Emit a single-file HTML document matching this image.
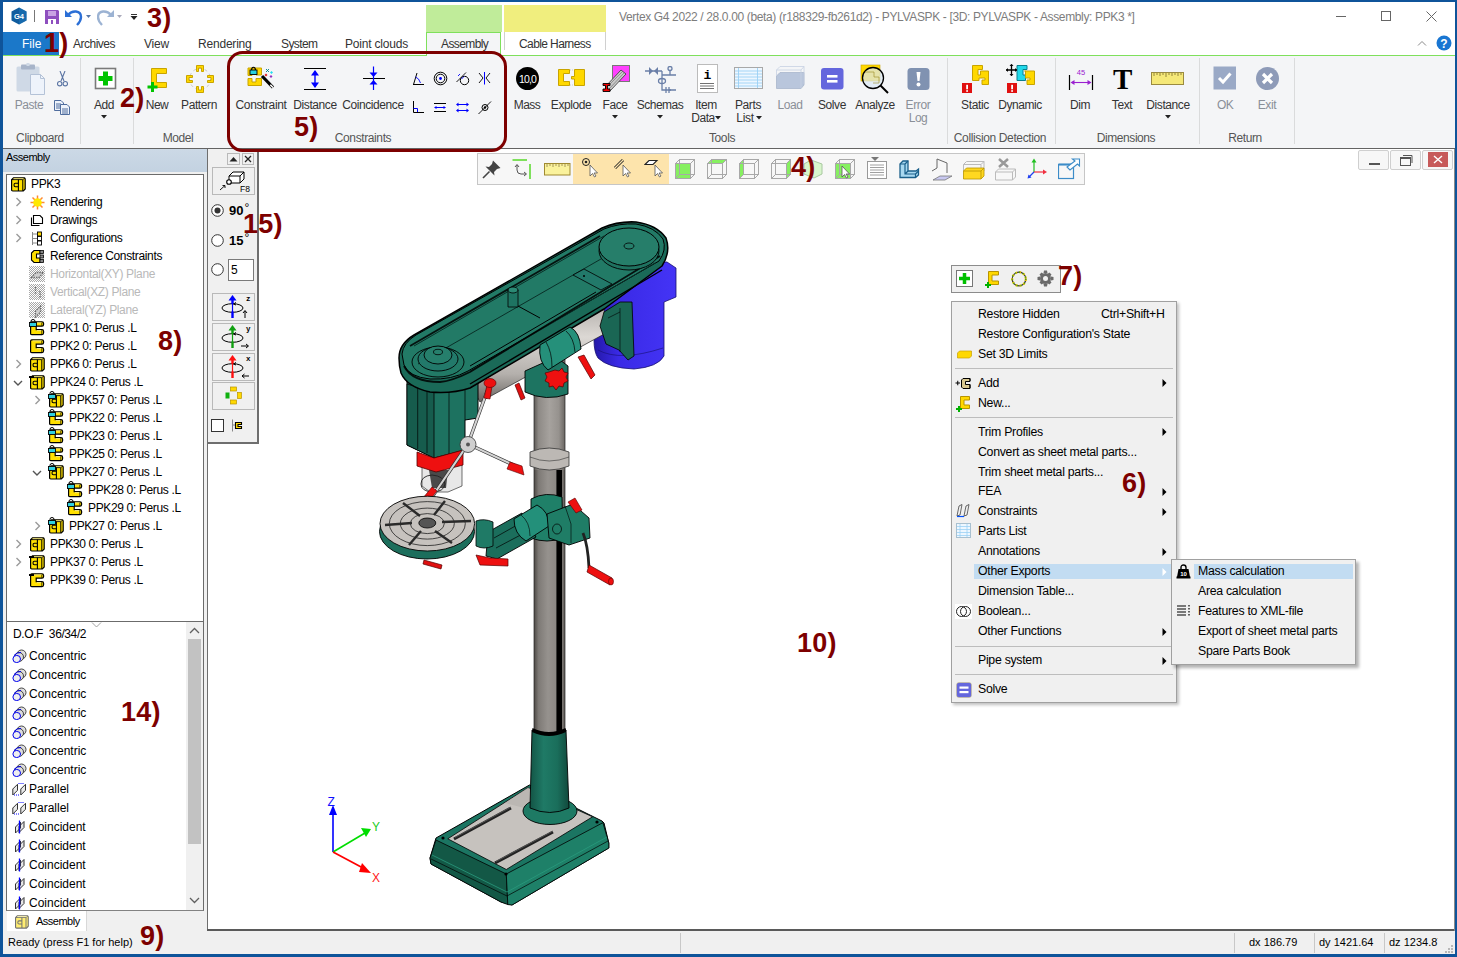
<!DOCTYPE html>
<html><head><meta charset="utf-8">
<style>
*{margin:0;padding:0;box-sizing:border-box}
html,body{width:1457px;height:957px;overflow:hidden}
body{background:#0f549a;font-family:"Liberation Sans",sans-serif;font-size:12px;color:#000;position:relative}
.a{position:absolute}
.t{position:absolute;white-space:nowrap;line-height:1}
.lbl{position:absolute;white-space:nowrap;line-height:1;font-weight:bold;color:#7d0000;font-size:27px;letter-spacing:0.2px}
#title{left:3px;top:2px;width:1452px;height:30px;background:#fff}
#tabs{left:3px;top:32px;width:1452px;height:23px;background:#fff}
#greenline{left:3px;top:55px;width:1452px;height:1px;background:#7fe05c}
#ribbon{left:3px;top:56px;width:1452px;height:92px;background:#f4f5f7}
#ribline{left:3px;top:148px;width:1452px;height:1px;background:#636363}
#leftp{left:3px;top:149px;width:204px;height:782px;background:#f0f0f0}
#vp{left:207px;top:149px;width:1248px;height:782px;background:#fff;border-left:1px solid #6e6e6e;border-bottom:1px solid #6e6e6e}
#status{left:3px;top:931px;width:1452px;height:23px;background:#f0f0f0}
.rt{position:absolute;white-space:nowrap;line-height:1;font-size:11.5px;color:#333}
.gl{position:absolute;white-space:nowrap;line-height:1;font-size:11.5px;color:#555;}
.sep{position:absolute;width:1px;background:#dadbdc;top:58px;height:86px}
.ti{position:absolute;white-space:nowrap;line-height:1;font-size:11.5px}
.mi{position:absolute;white-space:nowrap;line-height:1;font-size:11.8px;color:#000}
</style></head><body>
<div class="a" id="title"></div>
<div class="a" id="tabs"></div>
<div class="a" id="greenline"></div>
<div class="a" id="ribbon"></div>
<div class="a" id="ribline"></div>
<div class="a" id="leftp"></div>
<div class="a" id="vp"></div>
<div class="a" id="status"></div>
<!-- MODEL -->
<svg class="a" style="left:0;top:0" width="1457" height="957" viewBox="0 0 1457 957">
<defs>
<linearGradient id="colg" x1="0" x2="1" y1="0" y2="0"><stop offset="0" stop-color="#4e4a46"/><stop offset="0.15" stop-color="#7e7a76"/><stop offset="0.45" stop-color="#96928e"/><stop offset="0.72" stop-color="#8c8884"/><stop offset="0.73" stop-color="#000"/><stop offset="0.9" stop-color="#000"/><stop offset="0.92" stop-color="#7a7672"/><stop offset="1" stop-color="#5a5652"/></linearGradient>
<linearGradient id="colg2" x1="0" x2="1" y1="0" y2="0"><stop offset="0" stop-color="#5e5a56"/><stop offset="0.15" stop-color="#8e8a86"/><stop offset="0.5" stop-color="#a6a29e"/><stop offset="0.8" stop-color="#96928e"/><stop offset="1" stop-color="#6a6662"/></linearGradient>
<linearGradient id="sleeveg" x1="0" x2="1"><stop offset="0" stop-color="#135445"/><stop offset="0.35" stop-color="#1f7a66"/><stop offset="0.7" stop-color="#1a6e5b"/><stop offset="1" stop-color="#11493c"/></linearGradient>
<linearGradient id="motg" x1="0" x2="1"><stop offset="0" stop-color="#2418a8"/><stop offset="0.3" stop-color="#3a2ae6"/><stop offset="1" stop-color="#4434f6"/></linearGradient>
<linearGradient id="tubeg" x1="0" x2="0" y1="0" y2="1"><stop offset="0" stop-color="#b8b4b0"/><stop offset="0.3" stop-color="#dcd8d4"/><stop offset="0.7" stop-color="#b4b0ac"/><stop offset="1" stop-color="#6a6662"/></linearGradient>
</defs>
<g stroke-linejoin="round">
<!-- column upper (gray, with black strip) -->
<rect x="534" y="330" width="31" height="410" fill="url(#colg)"/>
<rect x="534" y="330" width="31" height="140" fill="url(#colg2)"/>
<path d="M534 330 V730 M565 330 V730" stroke="#222" stroke-width="0.7"/>
<!-- motor -->
<path d="M594 340 Q593 318 596 306 L664 262 L667 262 L676 268 L676 297 L664 302 V356 Q658 367 634 369 Q608 368 598 358 Q594 352 594 340Z" fill="url(#motg)" stroke="#160f70" stroke-width="0.8"/>
<path d="M598 350 Q620 362 663 348" fill="none" stroke="#160f70" stroke-width="0.6"/>
<!-- horizontal tube under housing -->
<path d="M470 384 L604 309 L606 333 L480 402Z" fill="url(#tubeg)" stroke="#222" stroke-width="0.7"/>
<!-- motor bracket -->
<path d="M604 312 L620 302 L632 302 L634 356 L628 360 L619 350 L606 344 L600 326Z" fill="#1a6654" stroke="#000" stroke-width="0.8"/>
<path d="M620 308 V352 M608 318 L620 312" stroke="#000" stroke-width="0.6"/>
<!-- head body -->
<path d="M407 380 L478 376 L478 418 L465 420 L465 450 L434 458 L407 445Z" fill="#1d7260" stroke="#000" stroke-width="1"/>
<path d="M407 384 L434 392 L434 458 L407 445Z" fill="#165c4d" stroke="#000" stroke-width="0.8"/>
<path d="M417.7 387 V449 M427 390 V453 M449 390 V454 M465 384 V420" stroke="#000" stroke-width="0.7"/>
<!-- housing silhouette (band) -->
<path d="M399 358 Q399 344 414 335 L602 228 Q618 221 636 222 Q657 225 666 238 Q671 252 662 266 L604 309 L470 388 Q452 394 430 392 Q407 387 401 373 Q399 366 399 358Z" fill="#1a6a58" stroke="#000" stroke-width="1.5"/>
<!-- housing top surface -->
<path d="M402 354 Q403 343 416 335 L604 229 Q619 223 636 224 Q655 227 663 239 Q667 250 659 261 L468 371 Q452 380 430 379 Q409 377 404 365Z" fill="#227a66" stroke="#000" stroke-width="1"/>
<path d="M414 346 L604 236 M418 364 L648 232 M470 371 L655 263" stroke="#0a3028" stroke-width="1" fill="none"/>
<path d="M404 366 Q412 382 440 382 Q452 381 470 372 L660 256" stroke="#000" stroke-width="1.8" fill="none" opacity="0.85"/>
<path d="M410 346 L600 236" stroke="#000" stroke-width="1.8" fill="none" opacity="0.85"/>
<path d="M470 366 L596 292" stroke="#000" stroke-width="1" fill="none"/>
<path d="M470 384 L662 270" stroke="#000" stroke-width="1.4" fill="none"/>
<!-- big pulley -->
<ellipse cx="629" cy="251" rx="30" ry="19" fill="#1f7260" stroke="#000" stroke-width="0.9"/>
<ellipse cx="629" cy="247" rx="30" ry="19" fill="#267e6a" stroke="#000" stroke-width="1"/>
<ellipse cx="629" cy="246" rx="5" ry="3" fill="none" stroke="#000" stroke-width="0.8"/>
<!-- small pulley -->
<ellipse cx="438" cy="362" rx="26" ry="15" fill="none" stroke="#000" stroke-width="0.9"/>
<ellipse cx="438" cy="359" rx="20" ry="12" fill="#22796a" stroke="#000" stroke-width="0.9"/>
<ellipse cx="438" cy="355" rx="14" ry="9" fill="#267f6c" stroke="#000" stroke-width="0.9"/>
<ellipse cx="438" cy="352" rx="4.5" ry="2.7" fill="none" stroke="#000" stroke-width="0.8"/>
<!-- plate on top -->
<path d="M573 275 L584 269 L612 284 L601 290Z" fill="#22796a" stroke="#000" stroke-width="0.8"/>
<circle cx="584" cy="276" r="1" fill="#000"/>
<!-- knob on top -->
<rect x="508" y="290" width="10" height="17" fill="#1e7462" stroke="#000" stroke-width="0.8"/>
<ellipse cx="513" cy="290" rx="5" ry="3" fill="#2b8a74" stroke="#000" stroke-width="0.8"/>
<path d="M518 306 L540 318" stroke="#000" stroke-width="1"/>
<!-- column clamp near top -->
<path d="M525 371 L525 392 Q546 402 568 394 L568 366 L560 360 L545 362Z" fill="#1d7461" stroke="#000" stroke-width="0.9"/>
<path d="M540 345 L570 327 Q580 332 581 349 L548 370 Q538 362 540 345Z" fill="#25907a" stroke="#000" stroke-width="0.9"/>
<path d="M546 342 Q552 352 552 367 M566 331 Q574 338 575 352" stroke="#000" stroke-width="0.7" fill="none"/>
<!-- red star knob -->
<path d="M555 370 L559 371 L562 368 L564 372 L568 373 L566 377 L568 381 L564 383 L563 387 L559 386 L556 390 L553 386 L549 387 L549 383 L545 381 L547 377 L545 373 L549 372Z" fill="#ee1010" stroke="#500" stroke-width="0.7"/>
<path d="M578 357 L584 355 L595 375 L591 379Z" fill="#ee1010" stroke="#500" stroke-width="0.7"/>
<path d="M515 385 L519 383 L525 398 L521 400Z" fill="#e01010" stroke="#500" stroke-width="0.7"/>
<!-- red collar + chuck -->
<path d="M422 462 L462 460 L462 486 L448 492 L430 492 L422 486Z" fill="#e8e8e8" stroke="#333" stroke-width="0.7"/>
<path d="M429 470 L448 470 L446 488 L432 488Z" fill="#4a4a4a"/>
<path d="M421 484 Q421 476 432 475 Q444 476 445 484 Q444 492 432 492 Q421 491 421 484Z" fill="none" stroke="#222" stroke-width="0.9"/>
<path d="M417 452 L434 458 L463 450 L463 465 L436 472 L417 466Z" fill="#ee1010" stroke="#500" stroke-width="0.8"/>
<!-- column ring -->
<path d="M530 452 Q549 444 569 452 L569 466 Q549 474 530 466Z" fill="#bcb8b4" stroke="#333" stroke-width="0.8"/>
<path d="M530 457 Q549 465 569 457" fill="none" stroke="#333" stroke-width="0.6"/>
<!-- levers -->
<path d="M468 444 L489 386 M468 444 L520 468 M468 444 L430 500" stroke="#333" stroke-width="3.4" fill="none"/>
<path d="M468 444 L489 386 M468 444 L520 468 M468 444 L430 500" stroke="#d4d4d4" stroke-width="2.2" fill="none"/>
<circle cx="468" cy="444.5" r="8" fill="#cfcfcf" stroke="#333" stroke-width="0.8"/>
<circle cx="468" cy="444.5" r="2" fill="#555"/>
<path d="M484 398 L487 385 L492 386 L490 399Z" fill="#ee1010" stroke="#500" stroke-width="0.6"/>
<ellipse cx="490" cy="383" rx="6" ry="4.5" fill="#ee1010" stroke="#500" stroke-width="0.6"/>
<path d="M510 462 L522 466 L524 475 L507 469Z" fill="#ee1010" stroke="#500" stroke-width="0.6"/>
<path d="M437 491 L428 502 L423 498 L432 487Z" fill="#ee1010" stroke="#500" stroke-width="0.6"/>
<ellipse cx="426" cy="502" rx="5" ry="4" fill="#ee1010" stroke="#500" stroke-width="0.6"/>
<!-- table arm and clamp -->
<path d="M531 499 Q546 491 562 497 L563 538 Q547 544 531 538Z" fill="#1f8068" stroke="#000" stroke-width="0.9"/>
<path d="M488 532 L522 513 L536 537 L497 559 L486 556Z" fill="#1b6e5c" stroke="#000" stroke-width="0.9"/>
<path d="M494 538 L526 520 M496 548 L530 530" stroke="#000" stroke-width="0.7"/>
<path d="M514 519 L537 505 Q549 511 549 526 L526 541 Q514 534 514 519Z" fill="#23907a" stroke="#000" stroke-width="0.9"/>
<path d="M521 515 Q530 522 530 536" stroke="#000" stroke-width="0.6" fill="none"/>
<path d="M547 514 L573 504 L589 518 L590 538 L569 545 L549 538Z" fill="#1f7d66" stroke="#000" stroke-width="0.9"/>
<path d="M565 506 L571 524 L571 543" stroke="#000" stroke-width="0.6" fill="none"/>
<ellipse cx="557" cy="529" rx="4.5" ry="5" fill="none" stroke="#000" stroke-width="0.7"/>
<path d="M568 502 L575 498 L582 510 L576 513Z" fill="#ee1010" stroke="#500" stroke-width="0.6"/>
<!-- table -->
<ellipse cx="427" cy="531.5" rx="47.5" ry="27.5" fill="#1c6e5c" stroke="#000" stroke-width="0.9"/>
<ellipse cx="427.3" cy="523.6" rx="47.3" ry="27.4" fill="#c6c2be" stroke="#000" stroke-width="0.9"/>
<ellipse cx="427.3" cy="523.6" rx="38" ry="22" fill="none" stroke="#222" stroke-width="0.8"/>
<ellipse cx="427.3" cy="523.6" rx="27" ry="15.5" fill="none" stroke="#222" stroke-width="0.8"/>
<ellipse cx="427.3" cy="523.6" rx="17" ry="10" fill="none" stroke="#222" stroke-width="0.8"/>
<ellipse cx="427.3" cy="523" rx="8.5" ry="5" fill="#555" stroke="#000" stroke-width="0.8"/>
<path d="M403 503 L420 516 M445 501 L434 515 M385 525 L412 523 M442 522 L471 521 M409 545 L421 531 M435 531 L452 543" stroke="#2a2a2a" stroke-width="2.4"/>
<path d="M476 521 Q484 518 493 522 L493 546 Q484 550 476 546Z" fill="#1f7a66" stroke="#000" stroke-width="0.8"/>
<!-- crank -->
<path d="M583 533 Q588 545 589 568" stroke="#222" stroke-width="2.8" fill="none"/>
<path d="M589 565 L612 578 L610 585 L587 572Z" fill="#ee1010" stroke="#500" stroke-width="0.7"/><ellipse cx="611" cy="581.5" rx="2.5" ry="3.5" fill="#ee1010" stroke="#500" stroke-width="0.6"/>
<path d="M476 555 L490 558 L508 559 L508 566 L480 565Z" fill="#ee1010" stroke="#500" stroke-width="0.7"/>
<path d="M424 560 L442 565 L441 569 L423 564Z" fill="#e01010" stroke="#500" stroke-width="0.7"/>
<!-- column lower black line -->
<path d="M533 730 Q549 738 566 730" stroke="#000" stroke-width="2" fill="none"/>
<!-- base -->
<path d="M430 858 L436 838 L529.5 785 L602 821 L604 823 L608.8 843 L608.8 848 L512 905 L501 902 L431 864Z" fill="#1b7562" stroke="#000" stroke-width="1"/>
<path d="M436 840 L506.3 874 L507.8 904.6 L501 902 L431 864 L430 858Z" fill="#135846" stroke="#000" stroke-width="0.8"/>
<path d="M506.3 874 L602.9 822.7 L608.8 843 L608.8 848 L512 905 L507.8 904.6Z" fill="#1e8068" stroke="#000" stroke-width="0.8"/>
<path d="M431 859 L507 896 L608 841" fill="none" stroke="#000" stroke-width="0.7"/>
<path d="M432 855 L507 892 L607 837" fill="none" stroke="#2a9a7e" stroke-width="0.8"/>
<path d="M447.8 838.8 L528 787.6 L592.6 816.8 L506.3 869.5Z" fill="#c6c2be" stroke="#000" stroke-width="0.8"/>
<path d="M528 787.6 L545 795 L540 812 L505 803Z" fill="#b0aca8" opacity="0.5"/>
<path d="M454 839 L511 808 M495 863 L553 832" stroke="#222" stroke-width="3"/>
<path d="M455 837.5 L511 807 M496 861.5 L553 831" stroke="#666" stroke-width="0.7"/>
<circle cx="443" cy="838" r="1.6" fill="#000"/><circle cx="506" cy="874" r="1.6" fill="#000"/><circle cx="597" cy="822" r="1.6" fill="#000"/>
<!-- flange + sleeve -->
<ellipse cx="550" cy="811" rx="27" ry="13.5" fill="#1e7a64" stroke="#000" stroke-width="0.9"/>
<path d="M532 730 Q549 737 566 730 L569 808 Q550 817 530 808Z" fill="url(#sleeveg)" stroke="#000" stroke-width="0.9"/>
<path d="M532.5 728 Q549 736 565.5 728 L566 732 Q549 740 532 732Z" fill="#000"/>
</g>
<!-- axis triad -->
<path d="M333 852 V812" stroke="#0000ff" stroke-width="1.6"/><path d="M329 815 L333 805 L337 815Z" fill="#0000ff"/>
<path d="M333 852 L365 833" stroke="#00dd00" stroke-width="1.6"/><path d="M361 828 L371 829 L366 837Z" fill="#00dd00"/>
<path d="M333 852 L363 868" stroke="#ff0000" stroke-width="1.6"/><path d="M362 863 L371 873 L359 872Z" fill="#ff0000"/>
<text x="327.5" y="806" font-size="12" fill="#1010ff" font-family="Liberation Sans">Z</text>
<text x="372" y="831" font-size="12" fill="#22cc22" font-family="Liberation Sans">Y</text>
<text x="372" y="882" font-size="12" fill="#ff2020" font-family="Liberation Sans">X</text>
</svg>

<!-- /MODEL -->

<!-- TITLE BAR -->
<svg class="a" style="left:10px;top:7px" width="18" height="18" viewBox="0 0 18 18"><path d="M9 0.5 L16.5 4.5 L16.5 13.5 L9 17.5 L1.5 13.5 L1.5 4.5Z" fill="#0f5c9e"/><path d="M9 0.5 L16.5 4.5 L16.5 13.5 L9 17.5Z" fill="#1a73b8" opacity=".6"/><text x="9" y="12.3" font-size="7.5" font-weight="bold" fill="#fff" text-anchor="middle" font-family="Liberation Sans">G4</text></svg>
<div class="a" style="left:34px;top:10px;width:1px;height:12px;background:#777"></div>
<svg class="a" style="left:44px;top:9px" width="16" height="16" viewBox="0 0 16 16"><path d="M1 1 H14 L15 2 V15 H1Z" fill="#8e4fbf"/><rect x="4" y="2" width="8" height="5" fill="#c9a3e3"/><rect x="4" y="10" width="8" height="5" fill="#fff"/><rect x="7" y="11" width="2" height="4" fill="#8e4fbf"/></svg>
<svg class="a" style="left:65px;top:8px" width="30" height="18" viewBox="0 0 30 18"><path d="M3 7 C7 2 16 2 16 9 C16 13 14 15 12 17" stroke="#2b6fd6" stroke-width="2.4" fill="none"/><path d="M0 2 L0 9 L7 9Z" fill="#2b6fd6"/><path d="M21 7 L26 7 L23.5 10Z" fill="#5577aa"/></svg>
<svg class="a" style="left:97px;top:8px" width="30" height="18" viewBox="0 0 30 18"><path d="M14 7 C10 2 1 2 1 9 C1 13 3 15 5 17" stroke="#9cb3d3" stroke-width="2.4" fill="none"/><path d="M17 2 L17 9 L10 9Z" fill="#9cb3d3"/><path d="M20 7 L25 7 L22.5 10Z" fill="#aab"/></svg>
<div class="a" style="left:131px;top:14px;width:6px;height:1px;background:#333"></div>
<svg class="a" style="left:130px;top:16px" width="8" height="4"><path d="M0.5 0 L7.5 0 L4 4Z" fill="#222"/></svg>
<div class="t" style="left:619px;top:10.5px;font-size:12px;color:#7d7d7d;letter-spacing:-0.36px">Vertex G4 2022 / 28.0.00 (beta) (r188329-fb261d2) - PYLVASPK - [3D: PYLVASPK - Assembly: PPK3 *]</div>
<div class="a" style="left:1336px;top:16px;width:10px;height:1px;background:#666"></div>
<div class="a" style="left:1381px;top:11px;width:10px;height:10px;border:1px solid #666"></div>
<svg class="a" style="left:1426px;top:10.5px" width="12" height="12"><path d="M0.5 0.5 L10.5 10.5 M10.5 0.5 L0.5 10.5" stroke="#666" stroke-width="1"/></svg>
<!-- context tab headers -->
<div class="a" style="left:426px;top:5px;width:76px;height:27px;background:#c0ec9a"></div>
<div class="a" style="left:504px;top:5px;width:102px;height:27px;background:#f0ee7e"></div>
<!-- RIBBON TEXT -->
<div class="t" style="left:-121px;width:300px;text-align:center;top:99px;font-size:12px;color:#8a8f98;letter-spacing:-0.43px">Paste</div>
<div class="t" style="left:-46px;width:300px;text-align:center;top:99px;font-size:12px;color:#333;letter-spacing:-0.5px">Add</div>
<div class="t" style="left:7px;width:300px;text-align:center;top:99px;font-size:12px;color:#333;letter-spacing:-0.56px">New</div>
<div class="t" style="left:49px;width:300px;text-align:center;top:99px;font-size:12px;color:#333;letter-spacing:-0.39px">Pattern</div>
<div class="t" style="left:111px;width:300px;text-align:center;top:99px;font-size:12px;color:#333;letter-spacing:-0.38px">Constraint</div>
<div class="t" style="left:165px;width:300px;text-align:center;top:99px;font-size:12px;color:#333;letter-spacing:-0.41px">Distance</div>
<div class="t" style="left:223px;width:300px;text-align:center;top:99px;font-size:12px;color:#333;letter-spacing:-0.42px">Coincidence</div>
<div class="t" style="left:377px;width:300px;text-align:center;top:99px;font-size:12px;color:#333;letter-spacing:-0.5px">Mass</div>
<div class="t" style="left:421px;width:300px;text-align:center;top:99px;font-size:12px;color:#333;letter-spacing:-0.43px">Explode</div>
<div class="t" style="left:465px;width:300px;text-align:center;top:99px;font-size:12px;color:#333;letter-spacing:-0.47px">Face</div>
<div class="t" style="left:510px;width:300px;text-align:center;top:99px;font-size:12px;color:#333;letter-spacing:-0.5px">Schemas</div>
<div class="t" style="left:556px;width:300px;text-align:center;top:99px;font-size:12px;color:#333;letter-spacing:-0.41px">Item</div>
<div class="t" style="left:553px;width:300px;text-align:center;top:112px;font-size:12px;color:#333;letter-spacing:-0.44px">Data</div>
<div class="t" style="left:598px;width:300px;text-align:center;top:99px;font-size:12px;color:#333;letter-spacing:-0.39px">Parts</div>
<div class="t" style="left:595px;width:300px;text-align:center;top:112px;font-size:12px;color:#333;letter-spacing:-0.33px">List</div>
<div class="t" style="left:640px;width:300px;text-align:center;top:99px;font-size:12px;color:#8a8f98;letter-spacing:-0.47px">Load</div>
<div class="t" style="left:682px;width:300px;text-align:center;top:99px;font-size:12px;color:#333;letter-spacing:-0.42px">Solve</div>
<div class="t" style="left:725px;width:300px;text-align:center;top:99px;font-size:12px;color:#333;letter-spacing:-0.43px">Analyze</div>
<div class="t" style="left:768px;width:300px;text-align:center;top:99px;font-size:12px;color:#8a8f98;letter-spacing:-0.37px">Error</div>
<div class="t" style="left:768px;width:300px;text-align:center;top:112px;font-size:12px;color:#8a8f98;letter-spacing:-0.47px">Log</div>
<div class="t" style="left:825px;width:300px;text-align:center;top:99px;font-size:12px;color:#333;letter-spacing:-0.35px">Static</div>
<div class="t" style="left:870px;width:300px;text-align:center;top:99px;font-size:12px;color:#333;letter-spacing:-0.47px">Dynamic</div>
<div class="t" style="left:930px;width:300px;text-align:center;top:99px;font-size:12px;color:#333;letter-spacing:-0.5px">Dim</div>
<div class="t" style="left:972px;width:300px;text-align:center;top:99px;font-size:12px;color:#333;letter-spacing:-0.39px">Text</div>
<div class="t" style="left:1018px;width:300px;text-align:center;top:99px;font-size:12px;color:#333;letter-spacing:-0.41px">Distance</div>
<div class="t" style="left:1075px;width:300px;text-align:center;top:99px;font-size:12px;color:#8a8f98;letter-spacing:-0.61px">OK</div>
<div class="t" style="left:1117px;width:300px;text-align:center;top:99px;font-size:12px;color:#8a8f98;letter-spacing:-0.35px">Exit</div>
<div class="t" style="left:-110px;width:300px;text-align:center;top:132px;font-size:12px;color:#555;letter-spacing:-0.4px">Clipboard</div>
<div class="t" style="left:28px;width:300px;text-align:center;top:132px;font-size:12px;color:#555;letter-spacing:-0.46px">Model</div>
<div class="t" style="left:213px;width:300px;text-align:center;top:132px;font-size:12px;color:#555;letter-spacing:-0.39px">Constraints</div>
<div class="t" style="left:572px;width:300px;text-align:center;top:132px;font-size:12px;color:#555;letter-spacing:-0.39px">Tools</div>
<div class="t" style="left:850px;width:300px;text-align:center;top:132px;font-size:12px;color:#555;letter-spacing:-0.37px">Collision Detection</div>
<div class="t" style="left:976px;width:300px;text-align:center;top:132px;font-size:12px;color:#555;letter-spacing:-0.44px">Dimensions</div>
<div class="t" style="left:1095px;width:300px;text-align:center;top:132px;font-size:12px;color:#555;letter-spacing:-0.42px">Return</div>
<div class="sep" style="left:80px"></div>
<div class="sep" style="left:133px"></div>
<div class="sep" style="left:947px"></div>
<div class="sep" style="left:1055px"></div>
<div class="sep" style="left:1199px"></div>
<div class="sep" style="left:1294px"></div>
<svg class="a" style="left:101px;top:115px" width="6" height="4"><path d="M0 0 L6 0 L3 3.5Z" fill="#222"/></svg>
<svg class="a" style="left:612px;top:115px" width="6" height="4"><path d="M0 0 L6 0 L3 3.5Z" fill="#222"/></svg>
<svg class="a" style="left:657px;top:115px" width="6" height="4"><path d="M0 0 L6 0 L3 3.5Z" fill="#222"/></svg>
<svg class="a" style="left:715px;top:116px" width="6" height="4"><path d="M0 0 L6 0 L3 3.5Z" fill="#222"/></svg>
<svg class="a" style="left:756px;top:116px" width="6" height="4"><path d="M0 0 L6 0 L3 3.5Z" fill="#222"/></svg>
<svg class="a" style="left:1165px;top:115px" width="6" height="4"><path d="M0 0 L6 0 L3 3.5Z" fill="#222"/></svg>
<!-- RIBBON ICONS 1 -->
<svg class="a" style="left:16px;top:63px" width="30" height="32" viewBox="0 0 30 32"><rect x="0.5" y="3.5" width="23" height="25" rx="1.5" fill="#cfd9e6"/><rect x="5" y="1.5" width="14" height="5" rx="1" fill="#a7b4c9"/><rect x="10.5" y="0" width="3" height="3" fill="#cfd9e6"/><path d="M14.5 11.5 H24.5 L28.5 15.5 V31.5 H14.5Z" fill="#eef3fb" stroke="#b4c2d7"/><path d="M24.5 11.5 V15.5 H28.5" fill="none" stroke="#b4c2d7"/></svg>
<svg class="a" style="left:57px;top:71px" width="11" height="16" viewBox="0 0 11 16"><path d="M3 0 L7 10 M8 0 L4 10" stroke="#5a74a3" stroke-width="1.1" fill="none"/><circle cx="2.7" cy="12.7" r="2.2" fill="none" stroke="#5a74a3" stroke-width="1.1"/><circle cx="8.3" cy="12.7" r="2.2" fill="none" stroke="#5a74a3" stroke-width="1.1"/></svg>
<svg class="a" style="left:54px;top:100px" width="17" height="15" viewBox="0 0 17 15"><path d="M0.5 0.5 H7 L9.5 3 V10.5 H0.5Z" fill="#eef3fb" stroke="#4f6d9e"/><path d="M2 4 H7 M2 6 H7 M2 8 H7" stroke="#4f6d9e"/><path d="M6.5 4.5 H13 L15.5 7 V14.5 H6.5Z" fill="#eef3fb" stroke="#4f6d9e"/><path d="M8 9 H14 M8 11 H14 M8 13 H14" stroke="#4f6d9e"/></svg>
<svg class="a" style="left:94px;top:67px" width="23" height="23" viewBox="0 0 23 23"><rect x="1.5" y="1.5" width="20" height="20" fill="#fff" stroke="#7a7a7a" stroke-width="1.6"/><path d="M11.5 4.5 V18.5 M4.5 11.5 H18.5" stroke="#00c400" stroke-width="5"/></svg>
<svg class="a" style="left:146px;top:67px" width="23" height="27" viewBox="0 0 23 27"><path d="M5.5 1.5 H20.5 V6.5 H10.5 V15.5 H20.5 V20.5 H5.5Z" fill="#ffd800" stroke="#c9a400"/><path d="M6.5 15 V25 M1.5 20 H11.5" stroke="#00c400" stroke-width="3"/></svg>
<svg class="a" style="left:186px;top:65px" width="28" height="29" viewBox="0 0 28 29"><circle cx="14" cy="14" r="10.5" fill="none" stroke="#bdbdbd" stroke-width="0.8" stroke-dasharray="3 3"/><path d="M10.5 0.5 H17.5 V6.5 H15.5 V3 H12.5 V6.5 H10.5Z" fill="#ffd800" stroke="#c9a400"/><path d="M10.5 27.5 H17.5 V21.5 H15.5 V25 H12.5 V21.5 H10.5Z" fill="#ffd800" stroke="#c9a400"/><path d="M0.5 10.5 V17.5 H6.5 V15.5 H3 V12.5 H6.5 V10.5Z" fill="#ffd800" stroke="#c9a400"/><path d="M27.5 10.5 V17.5 H21.5 V15.5 H25 V12.5 H21.5 V10.5Z" fill="#ffd800" stroke="#c9a400"/></svg>
<svg class="a" style="left:247px;top:66px" width="30" height="26" viewBox="0 0 30 26"><path d="M1 2 H14.5 V9 H9 V7 H5 V9.5 H1Z" fill="#ffd800" stroke="#c9a400"/><path d="M1 12.5 H5 V16 H9 V12.5 H14.5 V19.5 H1Z" fill="#ffd800" stroke="#c9a400"/><path d="M4.5 4.5 Q4.5 1.2 6.5 1.2 Q8.5 1.2 8.5 4.5" fill="none" stroke="#000" stroke-width="1.1"/><rect x="3" y="4" width="7" height="4.5" fill="#28d0e0" stroke="#000" stroke-width="0.9"/><path d="M15 10 L26 21.5" stroke="#000" stroke-width="3.2"/><path d="M23.3 18.8 L26 21.5" stroke="#fff" stroke-width="1.6"/><path d="M19 3 L22 6 M22 3 L19 6" stroke="#008080" stroke-width="0.9"/><path d="M23 6.5 L24.5 5 L26 6.5 L24.5 8Z" fill="#20e0f0"/><path d="M17.5 9 L19 7.5 L20.5 9 L19 10.5Z" fill="#e02020"/><path d="M22.5 10.5 L24 9 L25.5 10.5 L24 12Z" fill="#9030c0"/></svg>
<svg class="a" style="left:303px;top:67px" width="24" height="24" viewBox="0 0 24 24"><path d="M1 1.5 H23 M1 22.5 H23" stroke="#000" stroke-width="1"/><path d="M12 4 V20" stroke="#0000ff" stroke-width="1.4"/><path d="M8 8.5 L12 3 L16 8.5Z M8 15.5 L12 21 L16 15.5Z" fill="#0000ff"/></svg>
<svg class="a" style="left:362px;top:66px" width="24" height="25" viewBox="0 0 24 25"><path d="M1 12.5 H23" stroke="#000" stroke-width="1"/><path d="M11.5 0.5 V24" stroke="#0000ff" stroke-width="1.2"/><path d="M7.5 6.5 L11.5 11 L15.5 6.5Z M7.5 18.5 L11.5 14 L15.5 18.5Z" fill="#0000ff"/></svg>
<svg class="a" style="left:412px;top:72px" width="13" height="14" viewBox="0 0 13 14"><path d="M1 12.5 H12 M1.5 12.5 L5 1" stroke="#000" stroke-width="1" fill="none"/><path d="M3.5 5 Q7 6 8.5 11" stroke="#0000ff" stroke-width="0.9" fill="none"/></svg>
<svg class="a" style="left:433px;top:71px" width="15" height="15" viewBox="0 0 15 15"><circle cx="7.5" cy="7.5" r="6.3" fill="none" stroke="#000" stroke-width="1"/><circle cx="7.5" cy="7.5" r="4.3" fill="none" stroke="#000" stroke-width="1"/><circle cx="7.5" cy="7.5" r="1.4" fill="#0000ff"/></svg>
<svg class="a" style="left:456px;top:72px" width="14" height="14" viewBox="0 0 14 14"><path d="M0.5 10 L10 0.5" stroke="#000" stroke-width="0.9"/><circle cx="8.5" cy="8.5" r="4.2" fill="none" stroke="#000" stroke-width="1"/><path d="M2 4 L4 2 M5.5 7 L8 4.5" stroke="#0000ff" stroke-width="0.9"/></svg>
<svg class="a" style="left:478px;top:72px" width="13" height="14" viewBox="0 0 13 14"><path d="M6.5 0 V12.5" stroke="#0000ff" stroke-width="1"/><path d="M1 1 L5 6 L1 11 M12 1 L8 6 L12 11" stroke="#000" stroke-width="0.9" fill="none"/></svg>
<svg class="a" style="left:412px;top:101px" width="13" height="13" viewBox="0 0 13 13"><path d="M1.5 0 V11.5 H12" stroke="#000" stroke-width="1" fill="none"/><path d="M1.5 7.5 H5.5 V11" stroke="#0000ff" stroke-width="1" fill="none"/></svg>
<svg class="a" style="left:434px;top:102px" width="13" height="11" viewBox="0 0 13 11"><path d="M0 1.5 H12 M0 9.5 H12" stroke="#000" stroke-width="1"/><path d="M1 5.5 H11" stroke="#0000ff" stroke-width="1"/><path d="M0 5.5 L2.5 4 V7Z M12 5.5 L9.5 4 V7Z" fill="#0000ff"/></svg>
<svg class="a" style="left:456px;top:102px" width="14" height="11" viewBox="0 0 14 11"><path d="M1 2.5 H12 M1 8.5 H12" stroke="#0000ff" stroke-width="1"/><path d="M0 2.5 L2.5 0.5 V4.5Z M13 2.5 L10.5 0.5 V4.5Z M0 8.5 L2.5 6.5 V10.5Z M13 8.5 L10.5 6.5 V10.5Z" fill="#0000ff"/></svg>
<svg class="a" style="left:478px;top:101px" width="14" height="14" viewBox="0 0 14 14"><path d="M0.5 13 L13 0.5" stroke="#000" stroke-width="0.9"/><circle cx="7" cy="6.5" r="3" fill="none" stroke="#000" stroke-width="1"/><circle cx="7" cy="6.5" r="1.2" fill="#000"/></svg>
<!-- RIBBON ICONS 2 -->
<svg class="a" style="left:515px;top:66px" width="25" height="25" viewBox="0 0 25 25"><circle cx="12.5" cy="12.5" r="11.5" fill="#000"/><text x="12.5" y="16.5" font-size="10.5" fill="#fff" text-anchor="middle" font-family="Liberation Sans" letter-spacing="-0.8">10,0</text></svg>
<svg class="a" style="left:558px;top:69px" width="28" height="19" viewBox="0 0 28 19"><path d="M0.5 0.5 H11.5 V4.5 H5.5 V12.5 H11.5 V16.5 H0.5Z" fill="#ffd800" stroke="#c9a400"/><path d="M26.5 0.5 H16.5 V7.5 H13.5 V10 H16.5 V16.5 H26.5Z" fill="#ffd800" stroke="#c9a400"/><path d="M12 1 H16 M12 16 H16" stroke="#ccc" stroke-dasharray="1 1"/></svg>
<svg class="a" style="left:602px;top:65px" width="29" height="30" viewBox="0 0 29 30"><rect x="10.5" y="0.5" width="17" height="16" fill="#ff40ff" stroke="#777"/><path d="M3 22 L19 5 L24 9 L8 26Z" fill="#c8c8c8" stroke="#333" stroke-width="0.8"/><path d="M5 22 L21 6 M7 24 L22 8" stroke="#666" stroke-width="0.6"/><path d="M1 18.5 H8 V20.5 H5.5 V24 H8 V26.5 H1 V24 H3.5 V20.5 H1Z" fill="#ee0000" stroke="#000" stroke-width="0.9"/></svg>
<svg class="a" style="left:645px;top:66px" width="32" height="28" viewBox="0 0 32 28"><g stroke="#6a7fa8" stroke-width="1.3" fill="none"><path d="M0 5 H17 M17 5 V24 H26 M17 9 H31 M25 9 V4"/><circle cx="25" cy="2.5" r="2"/><ellipse cx="17" cy="15" rx="3.5" ry="2.5"/><path d="M21 21 V27 M24 21 V27 M24 24 H31"/></g><path d="M4 1 L8 5 L4 9Z M13 1 L9 5 L13 9Z" fill="#6a7fa8"/></svg>
<svg class="a" style="left:697px;top:64px" width="21" height="29" viewBox="0 0 21 29"><rect x="0.5" y="0.5" width="20" height="28" fill="#fff" stroke="#bbb"/><text x="10.5" y="15" font-size="13" font-weight="bold" fill="#000" text-anchor="middle" font-family="Liberation Mono">i</text><path d="M3 19.5 H17 M3 22 H17 M3 24.5 H17" stroke="#333" stroke-width="0.7"/></svg>
<svg class="a" style="left:734px;top:67px" width="30" height="24" viewBox="0 0 30 24"><rect x="0.5" y="0.5" width="28" height="21" fill="#eef7ff" stroke="#a8a8a8"/><g stroke="#9bd0f5" stroke-width="0.9"><path d="M1 4 H28 M1 7 H28 M1 10 H28 M1 13 H28 M1 16 H28 M1 19 H28 M4.5 1 V21 M23.5 1 V21"/></g></svg>
<svg class="a" style="left:776px;top:66px" width="29" height="26" viewBox="0 0 29 26"><path d="M0.5 10 L4 6.5 H28 V19 L25 22.5 H0.5Z" fill="#b9c6dc" stroke="#a8b6cc" stroke-width="0.8"/><path d="M0.5 4 L4 0.5 H28 V18 M0.5 4 H25 V22.5 M25 4 L28 0.5 M0.5 4 V10" fill="none" stroke="#c6d0e2" stroke-width="0.8"/></svg>
<svg class="a" style="left:821px;top:68px" width="23" height="22" viewBox="0 0 23 22"><rect x="0" y="0" width="22.5" height="21.5" rx="3" fill="#6466dd"/><rect x="6" y="7" width="10.5" height="2.6" fill="#fff"/><rect x="6" y="12" width="10.5" height="2.6" fill="#fff"/></svg>
<svg class="a" style="left:860px;top:64px" width="30" height="30" viewBox="0 0 30 30"><rect x="1" y="1" width="19" height="16" fill="#ffd800" stroke="#c9a400" stroke-width="0.6"/><circle cx="13" cy="14" r="10.5" fill="#dce8f4" fill-opacity="0.7" stroke="#000" stroke-width="1.3"/><path d="M5 8 H14 V13 H19 V19 H13" stroke="#9a8a20" stroke-width="1" fill="none" opacity="0.6"/><path d="M20.5 21.5 L28 29" stroke="#000" stroke-width="2"/></svg>
<svg class="a" style="left:907px;top:68px" width="23" height="23" viewBox="0 0 23 23"><rect x="0.5" y="0" width="22" height="22" rx="3.5" fill="#8092b1"/><path d="M9.5 4 H13.5 L12.5 13 H10.5Z" fill="#fff"/><circle cx="11.5" cy="16.5" r="2" fill="#fff"/></svg>
<svg class="a" style="left:961px;top:64px" width="31" height="30" viewBox="0 0 31 30"><path d="M11.5 1.5 H21.5 V5.5 H17 V11 H19.5 V7 H27.5 V20.5 H21 V16 H24 V14 H18 V16.5 H11.5Z" fill="#ffd800" stroke="#c9a400"/><rect x="1" y="19" width="10" height="10" fill="#e01010"/><rect x="5.2" y="20.8" width="1.8" height="4.5" fill="#fff"/><rect x="5.2" y="26.2" width="1.8" height="1.6" fill="#fff"/></svg>
<svg class="a" style="left:1005px;top:63px" width="32" height="31" viewBox="0 0 32 31"><path d="M12 2.5 H22 V6.5 H18 V12 H20.5 V17.5 H12Z" fill="#20d8ea" stroke="#0a8090"/><path d="M19.5 8 H29.5 V21.5 H22 V17 H25 V15 H20.5 V8Z" fill="#ffd800" stroke="#c9a400"/><path d="M1 7 H12 M6.5 1.5 V13" stroke="#000" stroke-width="1.3"/><path d="M1 7 L3 5 V9Z M12 7 L10 5 V9Z M6.5 1 L4.5 3 H8.5Z M6.5 13 L4.5 11 H8.5Z" fill="#000"/><rect x="2" y="20" width="10" height="10" fill="#e01010"/><rect x="6.2" y="21.8" width="1.8" height="4.5" fill="#fff"/><rect x="6.2" y="27.2" width="1.8" height="1.6" fill="#fff"/></svg>
<svg class="a" style="left:1068px;top:66px" width="26" height="25" viewBox="0 0 26 25"><path d="M1.5 9 V24 M24.5 9 V24" stroke="#000" stroke-width="1.2"/><path d="M4 16.5 H22" stroke="#9a20d0" stroke-width="1.1"/><path d="M2.5 16.5 L6.5 14 V19Z M23.5 16.5 L19.5 14 V19Z" fill="#9a20d0"/><text x="13" y="9" font-size="7.5" fill="#9a20d0" text-anchor="middle" font-family="Liberation Sans">45</text></svg>
<div class="t" style="left:1113px;top:65px;font-family:'Liberation Serif';font-size:29px;font-weight:bold;color:#000">T</div>
<svg class="a" style="left:1151px;top:72px" width="34" height="14" viewBox="0 0 34 14"><rect x="0.5" y="0.5" width="32" height="12" fill="#f5e878" stroke="#9a8a40"/><path d="M3 1 V4 M6 1 V3 M9 1 V4 M12 1 V3 M15 1 V5 M18 1 V3 M21 1 V4 M24 1 V3 M27 1 V4 M30 1 V3" stroke="#6a5a20" stroke-width="0.7"/></svg>
<svg class="a" style="left:1213px;top:66px" width="24" height="24" viewBox="0 0 24 24"><rect x="0.5" y="0.5" width="22.5" height="23" fill="#9aa9c6"/><path d="M6 12 L10 16 L17.5 7.5" stroke="#fff" stroke-width="3" fill="none"/></svg>
<svg class="a" style="left:1255px;top:66px" width="25" height="25" viewBox="0 0 25 25"><circle cx="12.5" cy="12.5" r="11.5" fill="#8e9bb8"/><path d="M8 8 L17 17 M17 8 L8 17" stroke="#fff" stroke-width="3.2"/></svg>
<!-- LEFT PANEL -->
<svg width="0" height="0" style="position:absolute"><defs>
<symbol id="asm" viewBox="0 0 15 15"><path d="M2.5 0.8 H13 Q14.2 0.8 14.2 2 V12 L12.3 14 H1.8 Q0.6 14 0.6 12.8 V2.8Z" fill="#ffe000" stroke="#000" stroke-width="1.2"/><path d="M0.8 2.6 H11.8 V14 M11.8 2.6 L13.8 0.9" stroke="#000" fill="none" stroke-width="1"/><path d="M2.5 1.7 H12.6" stroke="#fff6a0" stroke-width="0.8"/><path d="M7.4 2.6 V14" stroke="#000" stroke-width="1.1"/><path d="M7.4 6.3 H4.3 Q3 6.3 3 8 Q3 9.7 4.3 9.7 H7.4" stroke="#000" fill="none" stroke-width="1.1"/></symbol>
<symbol id="part" viewBox="0 0 15 15"><path d="M1.8 0.8 H12 Q13.6 0.8 13.6 2.4 V3.6 Q13.6 5.2 12 5.2 H6.2 V8.6 H12 Q13.6 8.6 13.6 10.2 V11.8 Q13.6 13.6 12 13.6 H1.8 Q0.6 13.6 0.6 12.4 V2 Q0.6 0.8 1.8 0.8Z" fill="#ffe000" stroke="#000" stroke-width="1.2"/><path d="M2.5 1.8 H11.5 M6.8 9.6 H11.5" stroke="#fff6a0" stroke-width="0.8"/><path d="M11.8 2 V4.8 M11.8 9.2 V13" stroke="#000" stroke-width="0.7"/></symbol>
<symbol id="lock" viewBox="0 0 8 8"><path d="M2 3.5 V2.2 Q2 0.5 4 0.5 Q6 0.5 6 2.2 V3.5" fill="none" stroke="#000" stroke-width="1"/><rect x="0.5" y="3.5" width="7" height="4" fill="#30d0e0" stroke="#000" stroke-width="0.9"/></symbol>
<pattern id="chk" width="2" height="2" patternUnits="userSpaceOnUse"><rect width="2" height="2" fill="#fff"/><rect width="1" height="1" fill="#a8a8a8"/><rect x="1" y="1" width="1" height="1" fill="#a8a8a8"/></pattern>
<symbol id="chev" viewBox="0 0 8 10"><path d="M1.5 1 L5.5 5 L1.5 9" fill="none" stroke="#9a9a9a" stroke-width="1.4"/></symbol>
<symbol id="chevd" viewBox="0 0 10 8"><path d="M1 2 L5 6 L9 2" fill="none" stroke="#555" stroke-width="1.4"/></symbol>
<symbol id="conc" viewBox="0 0 15 14"><ellipse cx="9.5" cy="5.5" rx="4.5" ry="4.5" fill="#ddd" stroke="#333" stroke-width="0.9"/><ellipse cx="7" cy="8" rx="4.5" ry="4.5" fill="#ddd" stroke="#333" stroke-width="0.9"/><ellipse cx="4.7" cy="10" rx="3.8" ry="3.6" fill="#eee" stroke="#0000ee" stroke-width="1"/><path d="M2 6.5 Q5 3 9 3.5" stroke="#0000ee" fill="none" stroke-width="1"/></symbol>
<symbol id="para" viewBox="0 0 15 14"><path d="M0.8 13 V7 L5.5 2.3 V8.3Z M8.8 13 V7 L13.5 2.3 V8.3Z" fill="#e8e8e8" stroke="#333" stroke-width="1"/><path d="M6.5 1.5 H12.5 M2 13 H8" stroke="#0000ff" stroke-width="1" stroke-dasharray="1 1"/></symbol>
<symbol id="coin" viewBox="0 0 15 14"><path d="M3.5 13 V7 L8.5 2 V8Z M7 12.5 V6.5 L12 1.5 V7.5Z" fill="#e8e8e8" stroke="#333" stroke-width="1"/><path d="M7.5 0.5 V13.5" stroke="#0000ff" stroke-width="1.3"/></symbol>
</defs></svg>
<div class="a" style="left:3px;top:149px;width:204px;height:23px;background:linear-gradient(#ccd9e6,#c3d2e1)"></div>
<div class="t" style="left:6px;top:152.4px;font-size:11px;color:#000;letter-spacing:-0.5px">Assembly</div>
<div class="a" style="left:6px;top:174px;width:198px;height:448px;background:#fff;border:1px solid #6b6b6b;border-bottom:1px solid #6b6b6b"></div>
<svg class="a" style="left:11px;top:176.5px" width="15" height="15"><use href="#asm"/></svg>
<div class="ti" style="left:31px;top:177.7px;color:#000;letter-spacing:-0.35px;font-size:12px">PPK3</div>
<svg class="a" style="left:15px;top:197.0px" width="8" height="10"><use href="#chev"/></svg>
<svg class="a" style="left:30px;top:194.5px" width="15" height="15"><g stroke="#ff8a30" stroke-width="1.5"><path d="M7.5 0.5 V14.5 M0.5 7.5 H14.5 M2.5 2.5 L12.5 12.5 M12.5 2.5 L2.5 12.5"/></g><circle cx="7.5" cy="7.5" r="4.3" fill="#ffe800"/></svg>
<div class="ti" style="left:50px;top:195.7px;color:#000;letter-spacing:-0.35px;font-size:12px">Rendering</div>
<svg class="a" style="left:15px;top:215.0px" width="8" height="10"><use href="#chev"/></svg>
<svg class="a" style="left:30px;top:212.5px" width="15" height="15"><path d="M1.5 4.5 V12.5 H9.5" fill="none" stroke="#000" stroke-width="1.1"/><path d="M3.5 2.5 H10 L12.5 5 V10.5 H3.5Z" fill="#fff" stroke="#000" stroke-width="1.1"/></svg>
<div class="ti" style="left:50px;top:213.7px;color:#000;letter-spacing:-0.35px;font-size:12px">Drawings</div>
<svg class="a" style="left:15px;top:233.0px" width="8" height="10"><use href="#chev"/></svg>
<svg class="a" style="left:30px;top:230.5px" width="15" height="15"><path d="M2.5 1 V14 M2.5 3 H7 M2.5 7.5 H7 M2.5 12 H7" stroke="#888" stroke-width="1"/><rect x="7.5" y="1" width="4" height="4" fill="#ffd800" stroke="#000" stroke-width="0.9"/><rect x="7.5" y="5.5" width="4" height="4" fill="#fff" stroke="#000" stroke-width="0.9"/><rect x="7.5" y="10" width="4" height="4" fill="#fff" stroke="#000" stroke-width="0.9"/></svg>
<div class="ti" style="left:50px;top:231.7px;color:#000;letter-spacing:-0.35px;font-size:12px">Configurations</div>
<svg class="a" style="left:30px;top:248.5px" width="15" height="15"><path d="M4 1.5 H10 V5 H6.5 V9 H10 V13.5 H4 L1.5 11 V4Z" fill="#ffe000" stroke="#000" stroke-width="1.1"/><rect x="10" y="1.5" width="3.5" height="3" fill="#888" stroke="#000" stroke-width="0.8"/><rect x="10" y="6" width="3.5" height="3" fill="#888" stroke="#000" stroke-width="0.8"/><rect x="10" y="10.5" width="3.5" height="3" fill="#888" stroke="#000" stroke-width="0.8"/></svg>
<div class="ti" style="left:50px;top:249.7px;color:#000;letter-spacing:-0.35px;font-size:12px">Reference Constraints</div>
<svg class="a" style="left:29px;top:265.5px" width="17" height="17"><rect x="0" y="0" width="16" height="16" fill="url(#chk)"/><path d="M2.5 11.5 L7 6.5 H14.5 L10 11.5Z" fill="#d0d0d0" stroke="#6a6a6a" stroke-width="1.3" stroke-dasharray="1.5 1"/></svg>
<div class="ti" style="left:50px;top:267.7px;color:#b9b9b9;letter-spacing:-0.35px;font-size:12px">Horizontal(XY) Plane</div>
<svg class="a" style="left:29px;top:283.5px" width="17" height="17"><rect x="0" y="0" width="16" height="16" fill="url(#chk)"/><path d="M6.5 3 V9.5 M11 7 V14" fill="#d0d0d0" stroke="#6a6a6a" stroke-width="1.3" stroke-dasharray="1.5 1"/></svg>
<div class="ti" style="left:50px;top:285.7px;color:#b9b9b9;letter-spacing:-0.35px;font-size:12px">Vertical(XZ) Plane</div>
<svg class="a" style="left:29px;top:301.5px" width="17" height="17"><rect x="0" y="0" width="16" height="16" fill="url(#chk)"/><path d="M6.5 15 V9 L11.5 4 V10Z" fill="#d0d0d0" stroke="#6a6a6a" stroke-width="1.3" stroke-dasharray="1.5 1"/></svg>
<div class="ti" style="left:50px;top:303.7px;color:#b9b9b9;letter-spacing:-0.35px;font-size:12px">Lateral(YZ) Plane</div>
<svg class="a" style="left:30px;top:320.5px" width="15" height="15"><use href="#part"/></svg>
<svg class="a" style="left:29px;top:318.5px" width="8" height="8"><use href="#lock"/></svg>
<div class="ti" style="left:50px;top:321.7px;color:#000;letter-spacing:-0.35px;font-size:12px">PPK1 0: Perus .L</div>
<svg class="a" style="left:30px;top:338.5px" width="15" height="15"><use href="#part"/></svg>
<div class="ti" style="left:50px;top:339.7px;color:#000;letter-spacing:-0.35px;font-size:12px">PPK2 0: Perus .L</div>
<svg class="a" style="left:15px;top:359.0px" width="8" height="10"><use href="#chev"/></svg>
<svg class="a" style="left:30px;top:356.5px" width="15" height="15"><use href="#asm"/></svg>
<div class="ti" style="left:50px;top:357.7px;color:#000;letter-spacing:-0.35px;font-size:12px">PPK6 0: Perus .L</div>
<svg class="a" style="left:13px;top:378.5px" width="10" height="8"><use href="#chevd"/></svg>
<svg class="a" style="left:30px;top:374.5px" width="15" height="15"><use href="#asm"/></svg>
<div class="a" style="left:29px;top:375.5px;width:5px;height:2px;background:#000"></div>
<div class="ti" style="left:50px;top:375.7px;color:#000;letter-spacing:-0.35px;font-size:12px">PPK24 0: Perus .L</div>
<svg class="a" style="left:34px;top:395.0px" width="8" height="10"><use href="#chev"/></svg>
<svg class="a" style="left:49px;top:392.5px" width="15" height="15"><use href="#asm"/></svg>
<svg class="a" style="left:48px;top:390.5px" width="8" height="8"><use href="#lock"/></svg>
<div class="ti" style="left:69px;top:393.7px;color:#000;letter-spacing:-0.35px;font-size:12px">PPK57 0: Perus .L</div>
<svg class="a" style="left:49px;top:410.5px" width="15" height="15"><use href="#part"/></svg>
<svg class="a" style="left:48px;top:408.5px" width="8" height="8"><use href="#lock"/></svg>
<div class="ti" style="left:69px;top:411.7px;color:#000;letter-spacing:-0.35px;font-size:12px">PPK22 0: Perus .L</div>
<svg class="a" style="left:49px;top:428.5px" width="15" height="15"><use href="#part"/></svg>
<svg class="a" style="left:48px;top:426.5px" width="8" height="8"><use href="#lock"/></svg>
<div class="ti" style="left:69px;top:429.7px;color:#000;letter-spacing:-0.35px;font-size:12px">PPK23 0: Perus .L</div>
<svg class="a" style="left:49px;top:446.5px" width="15" height="15"><use href="#part"/></svg>
<svg class="a" style="left:48px;top:444.5px" width="8" height="8"><use href="#lock"/></svg>
<div class="ti" style="left:69px;top:447.7px;color:#000;letter-spacing:-0.35px;font-size:12px">PPK25 0: Perus .L</div>
<svg class="a" style="left:32px;top:468.5px" width="10" height="8"><use href="#chevd"/></svg>
<svg class="a" style="left:49px;top:464.5px" width="15" height="15"><use href="#asm"/></svg>
<svg class="a" style="left:48px;top:462.5px" width="8" height="8"><use href="#lock"/></svg>
<div class="ti" style="left:69px;top:465.7px;color:#000;letter-spacing:-0.35px;font-size:12px">PPK27 0: Perus .L</div>
<svg class="a" style="left:68px;top:482.5px" width="15" height="15"><use href="#part"/></svg>
<svg class="a" style="left:67px;top:480.5px" width="8" height="8"><use href="#lock"/></svg>
<div class="ti" style="left:88px;top:483.7px;color:#000;letter-spacing:-0.35px;font-size:12px">PPK28 0: Perus .L</div>
<svg class="a" style="left:68px;top:500.5px" width="15" height="15"><use href="#part"/></svg>
<svg class="a" style="left:67px;top:498.5px" width="8" height="8"><use href="#lock"/></svg>
<div class="ti" style="left:88px;top:501.7px;color:#000;letter-spacing:-0.35px;font-size:12px">PPK29 0: Perus .L</div>
<svg class="a" style="left:34px;top:521.0px" width="8" height="10"><use href="#chev"/></svg>
<svg class="a" style="left:49px;top:518.5px" width="15" height="15"><use href="#asm"/></svg>
<svg class="a" style="left:48px;top:516.5px" width="8" height="8"><use href="#lock"/></svg>
<div class="ti" style="left:69px;top:519.7px;color:#000;letter-spacing:-0.35px;font-size:12px">PPK27 0: Perus .L</div>
<svg class="a" style="left:15px;top:539.0px" width="8" height="10"><use href="#chev"/></svg>
<svg class="a" style="left:30px;top:536.5px" width="15" height="15"><use href="#asm"/></svg>
<div class="ti" style="left:50px;top:537.7px;color:#000;letter-spacing:-0.35px;font-size:12px">PPK30 0: Perus .L</div>
<svg class="a" style="left:15px;top:557.0px" width="8" height="10"><use href="#chev"/></svg>
<svg class="a" style="left:30px;top:554.5px" width="15" height="15"><use href="#asm"/></svg>
<div class="a" style="left:29px;top:555.5px;width:5px;height:2px;background:#000"></div>
<div class="ti" style="left:50px;top:555.7px;color:#000;letter-spacing:-0.35px;font-size:12px">PPK37 0: Perus .L</div>
<svg class="a" style="left:30px;top:572.5px" width="15" height="15"><use href="#part"/></svg>
<div class="a" style="left:29px;top:573.5px;width:5px;height:2px;background:#000"></div>
<div class="ti" style="left:50px;top:573.7px;color:#000;letter-spacing:-0.35px;font-size:12px">PPK39 0: Perus .L</div>
<div class="a" style="left:6px;top:621px;width:198px;height:290px;background:#fff;border-left:1px solid #6b6b6b;border-right:1px solid #6b6b6b;border-top:1px solid #6b6b6b;border-bottom:1px solid #828282"></div>
<svg class="a" style="left:91px;top:622px" width="11" height="6"><path d="M1 0.5 L5.5 5 L10 0.5" fill="none" stroke="#999" stroke-width="0.9"/></svg>
<div class="ti" style="left:13px;top:628px;font-size:12px;letter-spacing:-0.4px">D.O.F&nbsp; 36/34/2</div>
<div class="a" style="left:186px;top:622px;width:17px;height:288px;background:#f0f0f0"></div>
<div class="a" style="left:188px;top:639px;width:13px;height:205px;background:#c2c2c2"></div>
<svg class="a" style="left:189px;top:627px" width="11" height="7"><path d="M1 6 L5.5 1.5 L10 6" fill="none" stroke="#606060" stroke-width="1.3"/></svg>
<svg class="a" style="left:189px;top:897px" width="11" height="7"><path d="M1 1 L5.5 5.5 L10 1" fill="none" stroke="#606060" stroke-width="1.3"/></svg>
<svg class="a" style="left:12px;top:649px" width="15" height="14"><use href="#conc"/></svg>
<div class="ti" style="left:29px;top:649.7px;font-size:12px">Concentric</div>
<svg class="a" style="left:12px;top:668px" width="15" height="14"><use href="#conc"/></svg>
<div class="ti" style="left:29px;top:668.7px;font-size:12px">Concentric</div>
<svg class="a" style="left:12px;top:687px" width="15" height="14"><use href="#conc"/></svg>
<div class="ti" style="left:29px;top:687.7px;font-size:12px">Concentric</div>
<svg class="a" style="left:12px;top:706px" width="15" height="14"><use href="#conc"/></svg>
<div class="ti" style="left:29px;top:706.7px;font-size:12px">Concentric</div>
<svg class="a" style="left:12px;top:725px" width="15" height="14"><use href="#conc"/></svg>
<div class="ti" style="left:29px;top:725.7px;font-size:12px">Concentric</div>
<svg class="a" style="left:12px;top:744px" width="15" height="14"><use href="#conc"/></svg>
<div class="ti" style="left:29px;top:744.7px;font-size:12px">Concentric</div>
<svg class="a" style="left:12px;top:763px" width="15" height="14"><use href="#conc"/></svg>
<div class="ti" style="left:29px;top:763.7px;font-size:12px">Concentric</div>
<svg class="a" style="left:12px;top:782px" width="15" height="14"><use href="#para"/></svg>
<div class="ti" style="left:29px;top:782.7px;font-size:12px">Parallel</div>
<svg class="a" style="left:12px;top:801px" width="15" height="14"><use href="#para"/></svg>
<div class="ti" style="left:29px;top:801.7px;font-size:12px">Parallel</div>
<svg class="a" style="left:12px;top:820px" width="15" height="14"><use href="#coin"/></svg>
<div class="ti" style="left:29px;top:820.7px;font-size:12px">Coincident</div>
<svg class="a" style="left:12px;top:839px" width="15" height="14"><use href="#coin"/></svg>
<div class="ti" style="left:29px;top:839.7px;font-size:12px">Coincident</div>
<svg class="a" style="left:12px;top:858px" width="15" height="14"><use href="#coin"/></svg>
<div class="ti" style="left:29px;top:858.7px;font-size:12px">Coincident</div>
<svg class="a" style="left:12px;top:877px" width="15" height="14"><use href="#coin"/></svg>
<div class="ti" style="left:29px;top:877.7px;font-size:12px">Coincident</div>
<svg class="a" style="left:12px;top:896px" width="15" height="14"><use href="#coin"/></svg>
<div class="ti" style="left:29px;top:896.7px;font-size:12px">Coincident</div>
<div class="a" style="left:7px;top:911px;width:80px;height:20px;background:#fff;border-right:1px solid #d8d8d8"></div>
<svg class="a" style="left:15px;top:915px" width="14" height="14" viewBox="0 0 15 15" style="opacity:.6"><g opacity="0.55"><use href="#asm"/></g></svg>
<div class="t" style="left:36px;top:916.3px;font-size:11px;color:#000;letter-spacing:-0.5px">Assembly</div>
<!-- PANEL 15 + TOOLBAR 4 -->
<div class="a" style="left:208px;top:149px;width:51px;height:295px;background:#f0f0f0;border-right:2px solid #6e6e6e;border-bottom:2px solid #6e6e6e"></div>
<div class="a" style="left:227px;top:153px;width:13px;height:12px;border:1px solid #b9b9b9;background:#f0f0f0"></div>
<div class="a" style="left:242px;top:153px;width:12px;height:12px;border:1px solid #b9b9b9;background:#f0f0f0"></div>
<svg class="a" style="left:229px;top:156px" width="9" height="6" viewBox="0 0 9 6"><path d="M0.5 5.5 L4.5 1 L8.5 5.5Z" fill="#222"/></svg>
<svg class="a" style="left:244px;top:155px" width="8" height="8" viewBox="0 0 8 8"><path d="M1 1 L7 7 M7 1 L1 7" stroke="#222" stroke-width="1.3"/></svg>
<div class="a" style="left:212px;top:167px;width:43px;height:28px;border:1px solid #b9b9b9;background:#f0f0f0"></div>
<svg class="a" style="left:218px;top:170px" width="36" height="23" viewBox="0 0 36 23"><path d="M11 6 L15 2 H26 V9 L22 13 H11Z" fill="#fff" stroke="#000" stroke-width="1"/><path d="M11 6 H22 V13 M22 6 L26 2" stroke="#000" fill="none" stroke-width="1"/><circle cx="11" cy="12" r="2.3" fill="#fff" stroke="#000" stroke-width="1.1"/><path d="M2 20 L7 15.5 M4.5 15.5 H7 V18" stroke="#000" stroke-width="0.9" fill="none"/><text x="22" y="22" font-size="8.5" font-family="Liberation Sans" fill="#000">F8</text></svg>
<svg class="a" style="left:211px;top:203.5px" width="13" height="13" viewBox="0 0 13 13"><circle cx="6.5" cy="6.5" r="5.8" fill="#fff" stroke="#333" stroke-width="1"/><circle cx="6.5" cy="6.5" r="3" fill="#333"/></svg>
<div class="t" style="left:229px;top:204px;font-size:13px;font-weight:bold;color:#000">90</div>
<div class="t" style="left:244.5px;top:202px;font-size:12px;color:#000">°</div>
<svg class="a" style="left:211px;top:233.5px" width="13" height="13" viewBox="0 0 13 13"><circle cx="6.5" cy="6.5" r="5.8" fill="#fff" stroke="#333" stroke-width="1"/></svg>
<div class="t" style="left:229px;top:234px;font-size:13px;font-weight:bold;color:#000">15</div>
<div class="t" style="left:244.5px;top:232px;font-size:12px;color:#000">°</div>
<svg class="a" style="left:211px;top:263px" width="13" height="13" viewBox="0 0 13 13"><circle cx="6.5" cy="6.5" r="5.8" fill="#fff" stroke="#333" stroke-width="1"/></svg>
<div class="a" style="left:228px;top:259px;width:26px;height:22px;background:#fff;border:1px solid #7a7a7a"></div>
<div class="t" style="left:231px;top:264px;font-size:12px;color:#000">5</div>
<div class="a" style="left:212px;top:293px;width:43px;height:28px;border:1px solid #b9b9b9;background:#f0f0f0"></div>
<svg class="a" style="left:221px;top:294px" width="32" height="26" viewBox="0 0 32 26"><ellipse cx="11.5" cy="14" rx="10.5" ry="4.3" fill="none" stroke="#000" stroke-width="1"/><path d="M11.5 4 V10 M11.5 17.5 V24" stroke="#0000ff" stroke-width="2.4"/><path d="M11.5 10 V18" stroke="#0000ff" stroke-width="1.2"/><path d="M7.5 6.5 L11.5 1 L15.5 6.5Z" fill="#0000ff"/><path d="M15 11 L12.5 10 L15 8.5" stroke="#000" fill="none" stroke-width="1"/><text x="25" y="7" font-size="7.5" font-family="Liberation Mono" font-weight="bold" fill="#000">z</text><path d="M24 24 V17 M22 19 L24 16.5 L26 19" stroke="#000" fill="none" stroke-width="1"/></svg>
<div class="a" style="left:212px;top:323px;width:43px;height:28px;border:1px solid #b9b9b9;background:#f0f0f0"></div>
<svg class="a" style="left:221px;top:324px" width="32" height="26" viewBox="0 0 32 26"><ellipse cx="11.5" cy="14" rx="10.5" ry="4.3" fill="none" stroke="#000" stroke-width="1"/><path d="M11.5 4 V10 M11.5 17.5 V24" stroke="#10a010" stroke-width="2.4"/><path d="M11.5 10 V18" stroke="#10a010" stroke-width="1.2"/><path d="M7.5 6.5 L11.5 1 L15.5 6.5Z" fill="#10a010"/><path d="M15 11 L12.5 10 L15 8.5" stroke="#000" fill="none" stroke-width="1"/><text x="25" y="7" font-size="7.5" font-family="Liberation Mono" font-weight="bold" fill="#000">y</text><path d="M20 22 H27 M25 20 L27.5 22 L25 24" stroke="#000" fill="none" stroke-width="1"/></svg>
<div class="a" style="left:212px;top:353px;width:43px;height:28px;border:1px solid #b9b9b9;background:#f0f0f0"></div>
<svg class="a" style="left:221px;top:354px" width="32" height="26" viewBox="0 0 32 26"><ellipse cx="11.5" cy="14" rx="10.5" ry="4.3" fill="none" stroke="#000" stroke-width="1"/><path d="M11.5 4 V10 M11.5 17.5 V24" stroke="#ff1010" stroke-width="2.4"/><path d="M11.5 10 V18" stroke="#ff1010" stroke-width="1.2"/><path d="M7.5 6.5 L11.5 1 L15.5 6.5Z" fill="#ff1010"/><path d="M15 11 L12.5 10 L15 8.5" stroke="#000" fill="none" stroke-width="1"/><text x="25" y="7" font-size="7.5" font-family="Liberation Mono" font-weight="bold" fill="#000">x</text><path d="M21 22 H28 M23.5 20 L21 22 L23.5 24" stroke="#000" fill="none" stroke-width="1"/></svg>
<div class="a" style="left:212px;top:382px;width:43px;height:28px;border:1px solid #b9b9b9;background:#f0f0f0"></div>
<svg class="a" style="left:224px;top:386px" width="20" height="20" viewBox="0 0 20 20"><rect x="6.5" y="1" width="6" height="4" fill="#ffd800" stroke="#b89400" stroke-width="0.7"/><rect x="6.5" y="14" width="6" height="4" fill="#ffd800" stroke="#b89400" stroke-width="0.7"/><rect x="13.5" y="6.5" width="4" height="6" fill="#ffd800" stroke="#b89400" stroke-width="0.7"/><rect x="1.5" y="6.5" width="4" height="6" fill="#10b010"/></svg>
<div class="a" style="left:211px;top:419px;width:13px;height:13px;background:#fff;border:1px solid #333"></div>
<svg class="a" style="left:231px;top:419px" width="12" height="13" viewBox="0 0 12 13"><path d="M1.5 0.5 V12.5 M1.5 6 H4" stroke="#888" stroke-width="1"/><path d="M4.5 3.5 H10.5 V5.5 H7 V7.5 H10.5 V9.5 H4.5Z" fill="#ffd800" stroke="#000" stroke-width="1.1"/></svg>
<div class="a" style="left:477px;top:153px;width:608px;height:32px;background:#f7f7f7;border:1px solid #c6c6c6"></div>
<div class="a" style="left:573px;top:154px;width:96px;height:30px;background:#fde4ac"></div>
<svg class="a" style="left:482px;top:159px" width="20" height="20" viewBox="0 0 20 20"><path d="M11 1.5 L18.5 9 L15 10 L12 13 L12.5 16.5 L3.5 7.5 L7 8 L10 5Z" fill="#444"/><path d="M7.5 12.5 L1 19" stroke="#444" stroke-width="1.6"/></svg>
<svg class="a" style="left:512px;top:159px" width="20" height="21" viewBox="0 0 20 21"><path d="M0.5 1 H15" stroke="#7fe05c" stroke-width="2"/><path d="M18 5 V20" stroke="#7fe05c" stroke-width="2"/><path d="M5 6 V11 Q5 15 9 15 H14" stroke="#555" stroke-width="1" fill="none"/><path d="M3 8 L5 5.5 L7 8 M12 13 L14.5 15 L12 17" stroke="#555" fill="none" stroke-width="1"/></svg>
<svg class="a" style="left:544px;top:163px" width="27" height="13" viewBox="0 0 27 13"><rect x="0.5" y="0.5" width="25.5" height="11.5" fill="#faf29c" stroke="#a08a30"/><path d="M3 1 V4 M6 1 V3 M9 1 V4 M12 1 V3 M15 1 V4 M18 1 V3 M21 1 V4 M24 1 V3" stroke="#807040" stroke-width="0.7"/></svg>
<svg class="a" style="left:580px;top:157px" width="22" height="22" viewBox="0 0 22 22"><circle cx="6" cy="5" r="3.5" fill="none" stroke="#222" stroke-width="1"/><circle cx="6" cy="5" r="1.3" fill="#222"/><path d="M10 8 V19 L12.5 16.5 L14.5 20 L16 19 L14 16 H17.5Z" fill="#fff" stroke="#555" stroke-width="0.8"/></svg>
<svg class="a" style="left:612px;top:157px" width="22" height="22" viewBox="0 0 22 22"><path d="M3 11 L11 3" stroke="#222" stroke-width="3"/><path d="M3 11 L11 3" stroke="#fde4ac" stroke-width="1.2"/><path d="M11 8 V19 L13.5 16.5 L15.5 20 L17 19 L15 16 H18.5Z" fill="#fff" stroke="#555" stroke-width="0.8"/></svg>
<svg class="a" style="left:644px;top:157px" width="22" height="22" viewBox="0 0 22 22"><path d="M1 7.5 L5 3.5 H13 L9 7.5Z" fill="#fff" stroke="#222" stroke-width="1.1"/><path d="M11 8 V19 L13.5 16.5 L15.5 20 L17 19 L15 16 H18.5Z" fill="#fff" stroke="#555" stroke-width="0.8"/></svg>
<svg class="a" style="left:675px;top:159px" width="20" height="20" viewBox="0 0 20 20"><rect x="1" y="5" width="14" height="14" fill="#86f060"/><g fill="none" stroke="#a8a8a8" stroke-width="1"><rect x="0.5" y="4.5" width="15" height="15"/><rect x="4.5" y="0.5" width="15" height="15"/><path d="M0.5 4.5 L4.5 0.5 M15.5 4.5 L19.5 0.5 M0.5 19.5 L4.5 15.5 M15.5 19.5 L19.5 15.5"/></g></svg>
<svg class="a" style="left:707px;top:159px" width="20" height="20" viewBox="0 0 20 20"><path d="M1 4.5 L4.5 1 H19 L15.5 4.5Z" fill="#86f060"/><g fill="none" stroke="#a8a8a8" stroke-width="1"><rect x="0.5" y="4.5" width="15" height="15"/><rect x="4.5" y="0.5" width="15" height="15"/><path d="M0.5 4.5 L4.5 0.5 M15.5 4.5 L19.5 0.5 M0.5 19.5 L4.5 15.5 M15.5 19.5 L19.5 15.5"/></g></svg>
<svg class="a" style="left:739px;top:159px" width="20" height="20" viewBox="0 0 20 20"><path d="M1 4.5 L4.5 1 V15.5 L1 19Z" fill="#86f060"/><g fill="none" stroke="#a8a8a8" stroke-width="1"><rect x="0.5" y="4.5" width="15" height="15"/><rect x="4.5" y="0.5" width="15" height="15"/><path d="M0.5 4.5 L4.5 0.5 M15.5 4.5 L19.5 0.5 M0.5 19.5 L4.5 15.5 M15.5 19.5 L19.5 15.5"/></g></svg>
<svg class="a" style="left:771px;top:159px" width="20" height="20" viewBox="0 0 20 20"><path d="M15.5 4.5 L19 1 V15.5 L15.5 19Z" fill="#86f060"/><g fill="none" stroke="#a8a8a8" stroke-width="1"><rect x="0.5" y="4.5" width="15" height="15"/><rect x="4.5" y="0.5" width="15" height="15"/><path d="M0.5 4.5 L4.5 0.5 M15.5 4.5 L19.5 0.5 M0.5 19.5 L4.5 15.5 M15.5 19.5 L19.5 15.5"/></g></svg>
<svg class="a" style="left:803px;top:159px" width="20" height="20" viewBox="0 0 20 20"><path d="M1 5 L8 1 L19 5 V15 L11 19 L1 15Z" fill="#d8f5cc" stroke="#a8c8a0"/></svg>
<svg class="a" style="left:835px;top:159px" width="20" height="20" viewBox="0 0 20 20"><rect x="1" y="5" width="14" height="14" fill="#86f060"/><g fill="none" stroke="#a8a8a8" stroke-width="1"><rect x="0.5" y="4.5" width="15" height="15"/><rect x="4.5" y="0.5" width="15" height="15"/><path d="M0.5 4.5 L4.5 0.5 M15.5 4.5 L19.5 0.5 M0.5 19.5 L4.5 15.5 M15.5 19.5 L19.5 15.5"/></g><path d="M7 7 V18 L9.5 15.5 L11.5 19 L13 18 L11 15 H14.5Z" fill="#fff" stroke="#555" stroke-width="0.8"/></svg>
<svg class="a" style="left:866px;top:156px" width="22" height="24" viewBox="0 0 22 24"><path d="M5 1 H13 L9 5Z" fill="#777"/><rect x="1.5" y="5.5" width="19" height="17" fill="#fff" stroke="#999"/><path d="M4 9 H18 M4 11.5 H18 M4 14 H18 M4 16.5 H18 M4 19 H18" stroke="#888" stroke-width="0.8"/></svg>
<svg class="a" style="left:899px;top:159px" width="21" height="20" viewBox="0 0 21 20"><path d="M1 5 L4 2 H9 V12 H17 L19.5 10 V16 L16.5 18.5 H1Z" fill="#a8d8f0" stroke="#1a5f8a" stroke-width="1.3"/><path d="M1 5 H6 V15 H16.5 V18.5 M6 5 L9 2 M6 15 L9 12 M16.5 15 L19.5 12" fill="none" stroke="#1a5f8a" stroke-width="1.2"/></svg>
<svg class="a" style="left:931px;top:158px" width="23" height="23" viewBox="0 0 23 23"><path d="M1 13 L6 10 V1 L16 5 V15" fill="none" stroke="#666" stroke-width="1"/><path d="M2 22 L9 18 H21 L14 22Z" fill="#c8c8f0" stroke="#777" stroke-width="0.8"/></svg>
<svg class="a" style="left:963px;top:160px" width="22" height="20" viewBox="0 0 22 20"><g fill="none" stroke="#bbb" stroke-width="1"><path d="M0.5 4.5 L3.5 1.5 H21 V11 M0.5 4.5 H18 V11 M18 4.5 L21 1.5 M0.5 4.5 V11"/></g><path d="M0.5 11 L3.5 8 H21 V16 L18 19 H0.5Z" fill="#ffd820" stroke="#b89400" stroke-width="0.8"/><path d="M0.5 11 H18 V19 M18 11 L21 8" fill="none" stroke="#b89400" stroke-width="0.8"/></svg>
<svg class="a" style="left:995px;top:158px" width="22" height="23" viewBox="0 0 22 23"><path d="M4 1 L13 9 M13 1 L4 9" stroke="#999" stroke-width="2.5"/><g fill="none" stroke="#bbb" stroke-width="1"><path d="M0.5 14 L3.5 11 H20.5 V19 L17.5 22 H0.5Z M0.5 14 H17.5 V22 M17.5 14 L20.5 11"/></g></svg>
<svg class="a" style="left:1027px;top:158px" width="22" height="22" viewBox="0 0 22 22"><path d="M7 14 V2" stroke="#20c020" stroke-width="1.2"/><path d="M4.5 4.5 L7 0.5 L9.5 4.5Z" fill="#20c020"/><path d="M7 14 H18" stroke="#f03040" stroke-width="1.2"/><path d="M16 11.5 L20 14 L16 16.5Z" fill="#f03040"/><path d="M7 14 L2 19" stroke="#2040f0" stroke-width="1.2"/><path d="M0.5 20.5 L1.5 16.5 L4.5 19.5Z" fill="#2040f0"/></svg>
<svg class="a" style="left:1058px;top:158px" width="23" height="22" viewBox="0 0 23 22"><rect x="0.5" y="6.5" width="15" height="14" fill="none" stroke="#3c8cc8" stroke-width="1.2"/><path d="M0.5 6.5 H15.5" stroke="#3c8cc8" stroke-width="2"/><path d="M9 9 L17 3 L14.5 1 H21.5 V8 L19.5 6 L12 12Z" fill="#fff" stroke="#3c8cc8" stroke-width="1.1"/></svg>
<div class="a" style="left:1358px;top:150px;width:31px;height:20px;background:#f7f7f7;border:1px solid #cfcfcf;border-radius:2px"></div>
<div class="a" style="left:1390px;top:150px;width:31px;height:20px;background:#f7f7f7;border:1px solid #cfcfcf;border-radius:2px"></div>
<div class="a" style="left:1422px;top:150px;width:31px;height:20px;background:#f7f7f7;border:1px solid #cfcfcf;border-radius:2px"></div>
<div class="a" style="left:1369px;top:163px;width:11px;height:2px;background:#555"></div>
<svg class="a" style="left:1400px;top:154px" width="13" height="12" viewBox="0 0 13 12"><path d="M3 1.5 H12 V9" fill="none" stroke="#555" stroke-width="1"/><rect x="0.5" y="3.5" width="10" height="8" fill="none" stroke="#555" stroke-width="1"/><path d="M0.5 4 H10.5" stroke="#555" stroke-width="2"/></svg>
<div class="a" style="left:1428px;top:152px;width:20px;height:15px;background:#c75a5a"></div>
<svg class="a" style="left:1433px;top:155px" width="10" height="9" viewBox="0 0 10 9"><path d="M1 1 L9 8 M9 1 L1 8" stroke="#fff" stroke-width="1.4"/></svg>
<!-- CONTEXT MENU -->
<div class="a" style="left:951px;top:265px;width:110px;height:28px;background:#f0f0f0;border:1px solid #8c8c8c"></div>
<svg class="a" style="left:956px;top:270px" width="18" height="18" viewBox="0 0 18 18"><rect x="0.5" y="0.5" width="16" height="16" fill="#fff" stroke="#777"/><path d="M8.5 3 V14 M3 8.5 H14" stroke="#00c000" stroke-width="3.5"/></svg>
<svg class="a" style="left:984px;top:270px" width="16" height="18" viewBox="0 0 16 18"><path d="M4.5 1.5 H14.5 V5 H8 V11 H14.5 V14.5 H4.5Z" fill="#ffd800" stroke="#b89400"/><path d="M4 12 V18 M1 15 H7" stroke="#00b000" stroke-width="2"/></svg>
<svg class="a" style="left:1010px;top:270px" width="18" height="18" viewBox="0 0 18 18"><circle cx="9" cy="9" r="6.8" fill="none" stroke="#333" stroke-width="1.2"/><circle cx="9" cy="9" r="6.8" fill="none" stroke="#e8c000" stroke-width="2.2" stroke-dasharray="2 2"/><circle cx="9" cy="9" r="6.8" fill="none" stroke="#20a020" stroke-width="1.2" stroke-dasharray="1 3"/></svg>
<svg class="a" style="left:1037px;top:270px" width="17" height="17" viewBox="0 0 17 17"><g fill="#6a6a6a"><circle cx="8.5" cy="8.5" r="5.5"/><path d="M7 0.5 H10 L10.5 3 H6.5Z M7 16.5 H10 L10.5 14 H6.5Z M0.5 7 V10 L3 10.5 V6.5Z M16.5 7 V10 L14 10.5 V6.5Z M2.5 4.6 L4.6 2.5 L6.6 4 L4 6.6Z M14.5 12.4 L12.4 14.5 L10.4 13 L13 10.4Z M12.4 2.5 L14.5 4.6 L13 6.6 L10.4 4Z M4.6 14.5 L2.5 12.4 L4 10.4 L6.6 13Z"/></g><circle cx="8.5" cy="8.5" r="2.5" fill="#f0f0f0"/></svg>
<div class="a" style="left:951px;top:301px;width:226px;height:402px;background:#f0f0f0;border:1px solid #a0a0a0;box-shadow:2px 2px 3px rgba(0,0,0,0.25)"></div>
<div class="mi" style="left:978px;top:307.71px;font-size:12.3px;letter-spacing:-0.28px">Restore Hidden</div>
<div class="mi" style="left:1101px;top:307.71px;font-size:12.3px;letter-spacing:-0.28px">Ctrl+Shift+H</div>
<div class="mi" style="left:978px;top:327.71px;font-size:12.3px;letter-spacing:-0.28px">Restore Configuration's State</div>
<div class="mi" style="left:978px;top:347.71px;font-size:12.3px;letter-spacing:-0.28px">Set 3D Limits</div>
<svg class="a" style="left:957px;top:350px" width="15" height="9" viewBox="0 0 15 9"><path d="M0.5 3 L2.5 1 H14.5 V6 L12.5 8 H0.5Z" fill="#ffd800" stroke="#c9a000" stroke-width="0.7"/></svg>
<div class="a" style="left:955px;top:368px;width:218px;height:1px;background:#bdbdbd"></div>
<div class="mi" style="left:978px;top:376.71px;font-size:12.3px;letter-spacing:-0.28px">Add</div>
<svg class="a" style="left:1162px;top:378.8px" width="5" height="8" viewBox="0 0 5 8"><path d="M0.5 0 L4.5 4 L0.5 8Z" fill="#000"/></svg>
<svg class="a" style="left:955px;top:376px" width="17" height="14" viewBox="0 0 17 14"><path d="M0.5 7 H5 M2.75 4.75 V9.25" stroke="#000" stroke-width="1"/><path d="M8 2.5 H15 V5.5 H10.5 V8.5 H15 V12.5 H8 L6.5 11 V4Z" fill="#d8c890" stroke="#000" stroke-width="1"/><path d="M15 2.5 V5 M15 8.5 V12" stroke="#000"/></svg>
<div class="mi" style="left:978px;top:396.71px;font-size:12.3px;letter-spacing:-0.28px">New...</div>
<svg class="a" style="left:955px;top:395px" width="17" height="17" viewBox="0 0 17 17"><path d="M5.5 1.5 H14.5 V5 H9 V10 H14.5 V13.5 H5.5Z" fill="#ffd800" stroke="#b89400"/><path d="M4 11 V17 M1 14 H7" stroke="#00b000" stroke-width="2"/></svg>
<div class="a" style="left:955px;top:417px;width:218px;height:1px;background:#bdbdbd"></div>
<div class="mi" style="left:978px;top:425.91px;font-size:12.3px;letter-spacing:-0.28px">Trim Profiles</div>
<svg class="a" style="left:1162px;top:428px" width="5" height="8" viewBox="0 0 5 8"><path d="M0.5 0 L4.5 4 L0.5 8Z" fill="#000"/></svg>
<div class="mi" style="left:978px;top:445.91px;font-size:12.3px;letter-spacing:-0.28px">Convert as sheet metal parts...</div>
<div class="mi" style="left:978px;top:465.91px;font-size:12.3px;letter-spacing:-0.28px">Trim sheet metal parts...</div>
<div class="mi" style="left:978px;top:485.41px;font-size:12.3px;letter-spacing:-0.28px">FEA</div>
<svg class="a" style="left:1162px;top:487.5px" width="5" height="8" viewBox="0 0 5 8"><path d="M0.5 0 L4.5 4 L0.5 8Z" fill="#000"/></svg>
<div class="mi" style="left:978px;top:505.41px;font-size:12.3px;letter-spacing:-0.28px">Constraints</div>
<svg class="a" style="left:1162px;top:507.5px" width="5" height="8" viewBox="0 0 5 8"><path d="M0.5 0 L4.5 4 L0.5 8Z" fill="#000"/></svg>
<svg class="a" style="left:956px;top:504px" width="16" height="14" viewBox="0 0 16 14"><path d="M1 12 L3 2 L6 0.5 L4 11Z M8 12 L10 2 L13 0.5 L11 11Z" fill="none" stroke="#444" stroke-width="0.8"/><path d="M1 12.5 H8" stroke="#0050ff" stroke-width="1.2"/></svg>
<div class="mi" style="left:978px;top:525.41px;font-size:12.3px;letter-spacing:-0.28px">Parts List</div>
<svg class="a" style="left:956px;top:523px" width="16" height="16" viewBox="0 0 16 16"><rect x="0.5" y="0.5" width="14" height="14" fill="#eef7ff" stroke="#a8c0d0"/><path d="M1 3.5 H14 M1 6.5 H14 M1 9.5 H14 M1 12.5 H14 M4 1 V14 M11 1 V14" stroke="#9bd0f5" stroke-width="0.8"/></svg>
<div class="mi" style="left:978px;top:545.41px;font-size:12.3px;letter-spacing:-0.28px">Annotations</div>
<svg class="a" style="left:1162px;top:547.5px" width="5" height="8" viewBox="0 0 5 8"><path d="M0.5 0 L4.5 4 L0.5 8Z" fill="#000"/></svg>
<div class="a" style="left:974px;top:564px;width:197px;height:15px;background:#c2dcf2"></div>
<div class="mi" style="left:978px;top:565.41px;font-size:12.3px;letter-spacing:-0.28px">Other Exports</div>
<svg class="a" style="left:1162px;top:567.5px" width="5" height="8" viewBox="0 0 5 8"><path d="M0.5 0 L4.5 4 L0.5 8Z" fill="#fff"/></svg>
<div class="mi" style="left:978px;top:585.41px;font-size:12.3px;letter-spacing:-0.28px">Dimension Table...</div>
<div class="mi" style="left:978px;top:605.41px;font-size:12.3px;letter-spacing:-0.28px">Boolean...</div>
<svg class="a" style="left:955px;top:604px" width="17" height="15" viewBox="0 0 17 15"><rect x="0" y="0" width="17" height="15" fill="#fff"/><circle cx="6.5" cy="7.5" r="5" fill="none" stroke="#222" stroke-width="1"/><circle cx="10.5" cy="7.5" r="5" fill="none" stroke="#222" stroke-width="1"/></svg>
<div class="mi" style="left:978px;top:625.41px;font-size:12.3px;letter-spacing:-0.28px">Other Functions</div>
<svg class="a" style="left:1162px;top:627.5px" width="5" height="8" viewBox="0 0 5 8"><path d="M0.5 0 L4.5 4 L0.5 8Z" fill="#000"/></svg>
<div class="a" style="left:955px;top:646px;width:218px;height:1px;background:#bdbdbd"></div>
<div class="mi" style="left:978px;top:654.41px;font-size:12.3px;letter-spacing:-0.28px">Pipe system</div>
<svg class="a" style="left:1162px;top:656.5px" width="5" height="8" viewBox="0 0 5 8"><path d="M0.5 0 L4.5 4 L0.5 8Z" fill="#000"/></svg>
<div class="a" style="left:955px;top:674px;width:218px;height:1px;background:#bdbdbd"></div>
<div class="mi" style="left:978px;top:683.41px;font-size:12.3px;letter-spacing:-0.28px">Solve</div>
<svg class="a" style="left:956px;top:682px" width="16" height="16" viewBox="0 0 16 16"><rect x="0.5" y="0.5" width="15" height="15" rx="2.5" fill="#6466dd" stroke="#e0d060" stroke-width="0.4"/><rect x="3.5" y="4.5" width="9" height="2.2" fill="#fff"/><rect x="3.5" y="9" width="9" height="2.2" fill="#fff"/></svg>
<div class="a" style="left:1171px;top:559px;width:185px;height:106px;background:#f0f0f0;border:1px solid #a0a0a0;box-shadow:3px 3px 3px rgba(0,0,0,0.3)"></div>
<div class="a" style="left:1194px;top:564px;width:159px;height:15px;background:#c2dcf2"></div>
<div class="mi" style="left:1198px;top:565.41px;font-size:12.3px;letter-spacing:-0.28px">Mass calculation</div>
<div class="mi" style="left:1198px;top:585.41px;font-size:12.3px;letter-spacing:-0.28px">Area calculation</div>
<div class="mi" style="left:1198px;top:605.41px;font-size:12.3px;letter-spacing:-0.28px">Features to XML-file</div>
<div class="mi" style="left:1198px;top:625.41px;font-size:12.3px;letter-spacing:-0.28px">Export of sheet metal parts</div>
<div class="mi" style="left:1198px;top:645.41px;font-size:12.3px;letter-spacing:-0.28px">Spare Parts Book</div>
<svg class="a" style="left:1176px;top:564px" width="15" height="15" viewBox="0 0 15 15"><path d="M5 5 V3.5 Q5 1 7.5 1 Q10 1 10 3.5 V5" fill="none" stroke="#000" stroke-width="1.4"/><path d="M2.5 5 H12.5 L14 13 H1Z" fill="#000"/><rect x="0.5" y="12.5" width="14" height="2" fill="#000"/><text x="7.5" y="11.5" font-size="6" font-weight="bold" fill="#fff" text-anchor="middle" font-family="Liberation Sans">10</text></svg>
<svg class="a" style="left:1177px;top:605px" width="14" height="12" viewBox="0 0 14 12"><path d="M0 1 H9 M0 4 H9 M0 7 H9 M0 10 H9" stroke="#000" stroke-width="1"/><path d="M12 0 V12" stroke="#000" stroke-width="1.2" stroke-dasharray="1.5 1.5"/></svg>
<!-- STATUS + LABELS -->
<div class="a" style="left:207px;top:929px;width:1248px;height:2px;background:#5a5a5a"></div>
<div class="a" style="left:1454px;top:149px;width:1px;height:782px;background:#8a8a8a"></div>
<div class="a" style="left:680px;top:933px;width:1px;height:20px;background:#c8c8c8"></div>
<div class="a" style="left:1234px;top:933px;width:1px;height:20px;background:#c8c8c8"></div>
<div class="a" style="left:1314px;top:933px;width:1px;height:20px;background:#c8c8c8"></div>
<div class="a" style="left:1384px;top:933px;width:1px;height:20px;background:#c8c8c8"></div>
<div class="t" style="left:8px;top:937px;font-size:11px;color:#000">Ready (press F1 for help)</div>
<div class="t" style="left:1249px;top:937px;font-size:11px;color:#000">dx 186.79</div>
<div class="t" style="left:1319px;top:937px;font-size:11px;color:#000">dy 1421.64</div>
<div class="a" style="left:1389px;top:937px;width:49px;height:13px;overflow:hidden"><div class="t" style="left:0;top:0;font-size:11px;color:#000">dz 1234.87</div></div>
<svg class="a" style="left:1444px;top:944px" width="10" height="10" viewBox="0 0 10 10"><g fill="#b8b8b8"><rect x="7" y="1" width="2" height="2"/><rect x="4" y="4" width="2" height="2"/><rect x="7" y="4" width="2" height="2"/><rect x="1" y="7" width="2" height="2"/><rect x="4" y="7" width="2" height="2"/><rect x="7" y="7" width="2" height="2"/></g></svg>
<!-- TABS -->
<div class="a" style="left:3px;top:32px;width:56px;height:23px;background:#1b78c9"></div>
<div class="t" style="left:22px;top:38px;font-size:12px;color:#fff">File</div>
<div class="t" style="left:73px;top:38px;font-size:12px;color:#333;letter-spacing:-0.5px">Archives</div>
<div class="t" style="left:144px;top:38px;font-size:12px;color:#333;letter-spacing:-0.2px">View</div>
<div class="t" style="left:198px;top:38px;font-size:12px;color:#333;letter-spacing:-0.2px">Rendering</div>
<div class="t" style="left:281px;top:38px;font-size:12px;color:#333;letter-spacing:-0.6px">System</div>
<div class="t" style="left:345px;top:38px;font-size:12px;color:#333;letter-spacing:-0.2px">Point clouds</div>
<div class="a" style="left:426px;top:32px;width:75px;height:24px;background:#f4f5f7;border:1px solid #7fe05c;border-bottom:none"></div>
<div class="t" style="left:441px;top:38px;font-size:12px;color:#333;letter-spacing:-0.6px">Assembly</div>
<div class="a" style="left:504px;top:32px;width:1px;height:18px;background:#d0d0d0"></div>
<div class="a" style="left:605px;top:32px;width:1px;height:18px;background:#d0d0d0"></div>
<div class="t" style="left:519px;top:38px;font-size:12px;color:#333;letter-spacing:-0.6px">Cable Harness</div>
<svg class="a" style="left:1417px;top:39.5px" width="12" height="8"><path d="M1 5.5 L5 1.5 L9 5.5" stroke="#8a8a8a" stroke-width="1" fill="none"/></svg>
<svg class="a" style="left:1436px;top:35px" width="16" height="16"><circle cx="8" cy="8" r="7.5" fill="#1976d2"/><text x="8" y="12.5" font-size="12" font-weight="bold" fill="#fff" text-anchor="middle" font-family="Liberation Sans">?</text></svg>

<!-- ANNOTATIONS -->
<svg class="a" style="left:0;top:0" width="1457" height="957"><rect x="228.5" y="52.5" width="277" height="98" rx="14" ry="14" fill="none" stroke="#7d0000" stroke-width="3"/></svg>
<div class="lbl" style="left:44px;top:29.8px">1)</div>
<div class="lbl" style="left:120px;top:84.8px">2)</div>
<div class="lbl" style="left:147px;top:4.8px">3)</div>
<div class="lbl" style="left:791px;top:153.8px">4)</div>
<div class="lbl" style="left:294px;top:113.8px">5)</div>
<div class="lbl" style="left:1122px;top:469.8px">6)</div>
<div class="lbl" style="left:1058px;top:262.8px">7)</div>
<div class="lbl" style="left:158px;top:327.8px">8)</div>
<div class="lbl" style="left:140px;top:922.8px">9)</div>
<div class="lbl" style="left:797px;top:629.8px">10)</div>
<div class="lbl" style="left:121px;top:698.8px">14)</div>
<div class="lbl" style="left:243px;top:210.8px">15)</div>
</body></html>
